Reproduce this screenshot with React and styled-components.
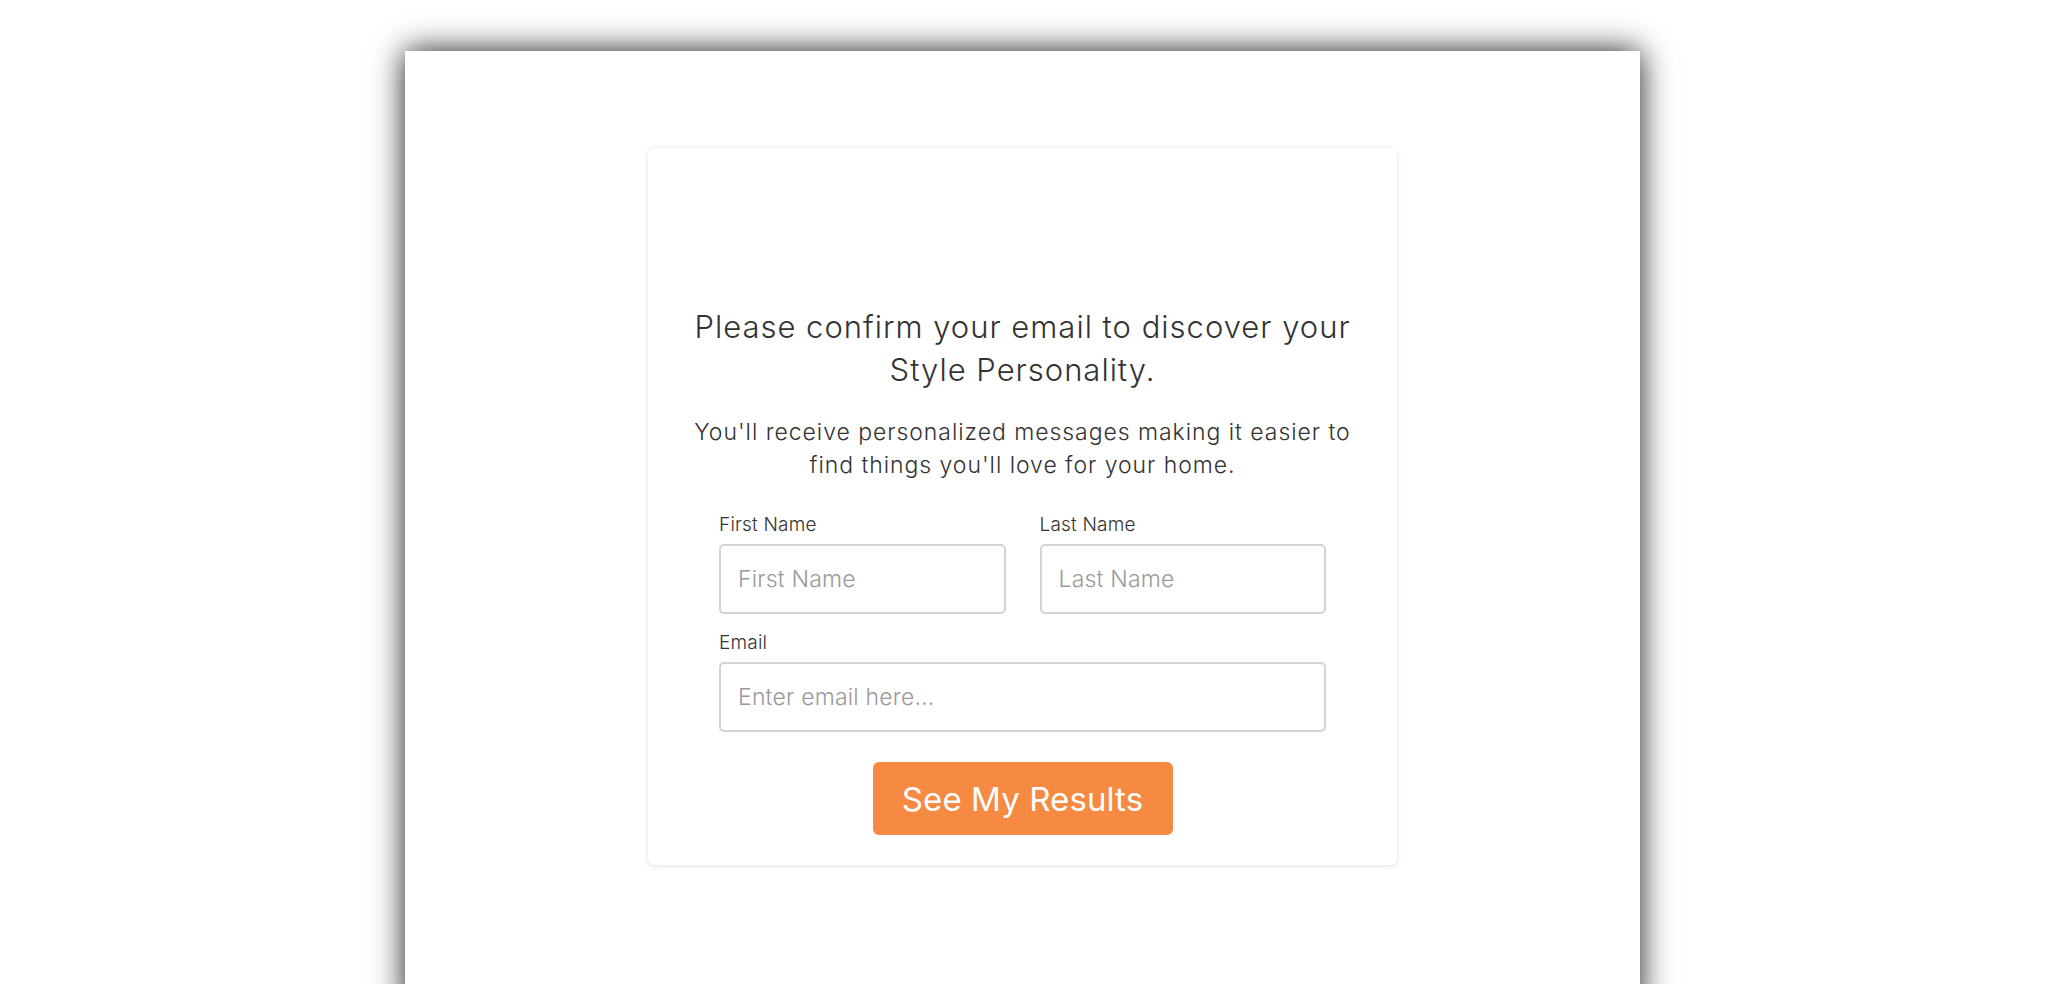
import React from "react";
import styled, { createGlobalStyle } from "styled-components";

const FONT = `Inter, "Open Sans", Lato, Arial, sans-serif`;

const GlobalStyle = createGlobalStyle`
  html, body {
    margin: 0;
    padding: 0;
    background: #ffffff;
    font-family: ${FONT};
  }
  #root { min-height: 984px; }
  * { box-sizing: border-box; }
`;

const Page = styled.div`
  padding-top: 51px;
  height: 984px;
  overflow: hidden;
`;

const Panel = styled.main`
  margin-left: 405px;
  width: 1235px;
  min-height: 960px;
  background: #ffffff;
  box-shadow: 0 0 30px rgba(0, 0, 0, 0.9);
  padding-top: 97px;
`;

const Card = styled.section`
  width: 749px;
  margin: 0 auto;
  background: #ffffff;
  border-radius: 6px;
  box-shadow: 0 1px 5px rgba(0, 0, 0, 0.13);
  padding: 157px 40px 30px;
  display: flex;
  flex-direction: column;
  align-items: center;
`;

const Heading = styled.h1`
  margin: 0;
  font-size: 31px;
  line-height: 43px;
  font-weight: 300;
  letter-spacing: 1px;
  color: #333333;
  text-align: center;
`;

const Subtext = styled.p`
  margin: 25px 0 0;
  font-size: 23px;
  line-height: 33px;
  font-weight: 300;
  letter-spacing: 0.95px;
  color: #333333;
  text-align: center;
`;

const Form = styled.form`
  width: 607px;
  margin-top: 31px;
  display: flex;
  flex-direction: column;
  gap: 17px;
`;

const Row = styled.div`
  display: grid;
  grid-template-columns: ${(p) => (p.$split ? "1fr 1fr" : "1fr")};
  column-gap: 34px;
`;

const Field = styled.label`
  display: flex;
  flex-direction: column;
`;

const LabelText = styled.span`
  font-size: 19px;
  line-height: 23px;
  font-weight: 300;
  letter-spacing: 0.2px;
  color: #333333;
  margin-bottom: 8px;
`;

const Input = styled.input`
  height: 70px;
  width: 100%;
  border: 2px solid #d4d4d4;
  border-radius: 5px;
  padding: 0 17px;
  font-family: ${FONT};
  font-size: 23px;
  font-weight: 300;
  letter-spacing: 0.2px;
  color: #333333;
  background: #ffffff;
  outline: none;
  &::placeholder {
    color: #9a9a9a;
  }
`;

const Actions = styled.div`
  display: flex;
  justify-content: center;
  margin-top: 13px;
`;

const Button = styled.button`
  width: 300px;
  height: 73px;
  border: none;
  border-radius: 6px;
  background: #f68a43;
  color: #ffffff;
  font-family: ${FONT};
  font-size: 33px;
  font-weight: 400;
  letter-spacing: 0.1px;
  cursor: pointer;
`;

export default function App() {
  return (
    <>
      <GlobalStyle />
      <Page>
        <Panel>
          <Card>
            <Heading>
              Please confirm your email to discover your Style Personality.
            </Heading>
            <Subtext>
              You'll receive personalized messages making it easier to find
              things you'll love for your home.
            </Subtext>
            <Form onSubmit={(e) => e.preventDefault()}>
              <Row $split>
                <Field>
                  <LabelText>First Name</LabelText>
                  <Input type="text" placeholder="First Name" />
                </Field>
                <Field>
                  <LabelText>Last Name</LabelText>
                  <Input type="text" placeholder="Last Name" />
                </Field>
              </Row>
              <Row>
                <Field>
                  <LabelText>Email</LabelText>
                  <Input type="email" placeholder="Enter email here..." />
                </Field>
              </Row>
              <Actions>
                <Button type="submit">See My Results</Button>
              </Actions>
            </Form>
          </Card>
        </Panel>
      </Page>
    </>
  );
}
